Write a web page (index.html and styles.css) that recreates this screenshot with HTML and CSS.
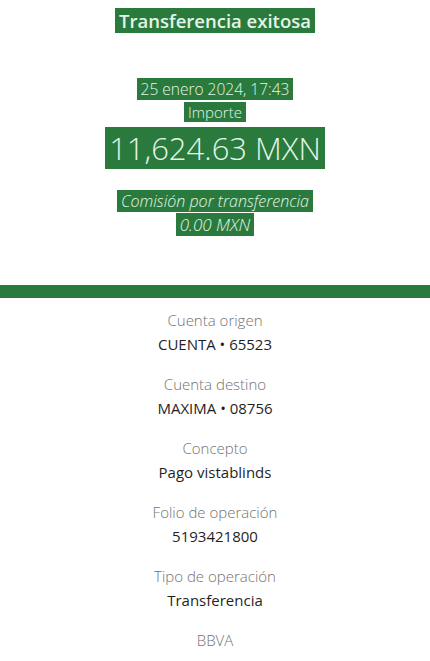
FILE: index.html
```html
<!DOCTYPE html>
<html lang="es">
<head>
  <meta charset="UTF-8">
  <title>Transferencia exitosa</title>
  <link rel="stylesheet" href="styles.css">
</head>
<body>

  <div class="hero">
    <div class="title"><span class="hl">Transferencia exitosa</span></div>
    <div class="date"><span class="hl">25 enero 2024, 17:43</span></div>
    <div class="caption"><span class="hl">Importe</span></div>
    <div class="amount"><span class="hl">11,624.63 MXN</span></div>
    <div class="fee"><span class="hl">Comisión por transferencia</span></div>
    <div class="fee fee-value"><span class="hl">0.00 MXN</span></div>
  </div>

  <div class="band"></div>

  <div class="details">
    <div class="item">
      <div class="label">Cuenta origen</div>
      <div class="value">CUENTA • 65523</div>
    </div>
    <div class="item">
      <div class="label">Cuenta destino</div>
      <div class="value">MAXIMA • 08756</div>
    </div>
    <div class="item">
      <div class="label">Concepto</div>
      <div class="value">Pago vistablinds</div>
    </div>
    <div class="item">
      <div class="label">Folio de operación</div>
      <div class="value">5193421800</div>
    </div>
    <div class="item">
      <div class="label">Tipo de operación</div>
      <div class="value">Transferencia</div>
    </div>
    <div class="item">
      <div class="label">BBVA</div>
    </div>
  </div>

</body>
</html>
```

FILE: styles.css
```css
html, body {
  margin: 0;
  padding: 0;
  background: #ffffff;
  font-family: "Open Sans", "Liberation Sans", sans-serif;
}
.hero {
  display: flex;
  flex-direction: column;
  align-items: center;
  padding-top: 10px;
  color: #e3f6e6;
  text-align: center;
}
.hl {
  background: #2a7a3e;
  padding: 0 4px;
}
.title {
  font-size: 18.5px;
  font-weight: 600;
  line-height: 22px;
}
.date {
  margin-top: 48px;
  font-size: 15.5px;
  font-weight: 300;
  line-height: 18px;
}
.caption {
  margin-top: 5px;
  font-size: 15px;
  font-weight: 300;
  line-height: 19px;
}
.amount {
  margin-top: 6px;
  font-size: 31px;
  font-weight: 300;
  line-height: 40px;
}
.fee {
  margin-top: 3px;
  font-size: 16px;
  font-weight: 300;
  font-style: italic;
  line-height: 20px;
}
.fee-value {
  font-size: 17px;
  line-height: 21px;
}
.amount + .fee {
  margin-top: 23px;
}
.band {
  margin-top: 50px;
  height: 13px;
  background: #2a7a3e;
}
.details {
  display: flex;
  flex-direction: column;
  align-items: center;
  padding-top: 12px;
  gap: 20px;
}
.item {
  display: flex;
  flex-direction: column;
  align-items: center;
  gap: 4px;
}
.label {
  font-size: 15px;
  font-weight: 300;
  line-height: 20px;
  color: #727272;
}
.value {
  font-size: 15px;
  font-weight: 400;
  line-height: 20px;
  color: #1f1f1f;
}
```
